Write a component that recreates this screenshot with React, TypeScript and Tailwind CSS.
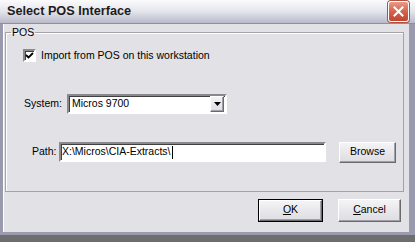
import React from "react";

const FONT = "font-['Liberation_Sans',Arial,sans-serif]";

const SUNKEN =
  "border-2 border-t-[#8a8a8a] border-l-[#8a8a8a] border-b-white border-r-white shadow-[inset_1px_1px_0_#404040] bg-white";

const RAISED =
  "border border-t-white border-l-white border-b-[#6a6a6a] border-r-[#6a6a6a] shadow-[inset_-1px_-1px_0_#a0a0a8] bg-linear-to-b from-[#f4f4f6] to-[#dddde2]";

function CloseButton() {
  return (
    <div className="flex h-[21px] w-[21px] items-center justify-center rounded-[3px] border border-white bg-linear-to-b from-[#e89a88] via-[#d6624a] to-[#c0452f] shadow-[0_0_0_1px_#b05040]">
      <svg width="11" height="11" viewBox="0 0 11 11">
        <path d="M1.5 1.5 L9.5 9.5 M9.5 1.5 L1.5 9.5" stroke="white" strokeWidth="2" strokeLinecap="square" />
      </svg>
    </div>
  );
}

function Checkbox() {
  return (
    <div className={`flex h-[13px] w-[13px] items-center justify-center ${SUNKEN}`}>
      <svg width="9" height="9" viewBox="0 0 9 9">
        <path d="M1 4 L3.5 6.5 L8 2" stroke="black" strokeWidth="1.8" fill="none" />
      </svg>
    </div>
  );
}

export default function App() {
  return (
    <div className={`flex h-[242px] w-[415px] flex-col overflow-hidden bg-[#6e6e70] text-[10.5px] text-black ${FONT}`}>
      <div className="flex h-[235px] flex-col">
        {/* title bar */}
        <div className="flex h-[24px] items-center justify-between border-b border-[#8e8ea0] bg-linear-to-b from-[#fbfbfd] via-[#e4e4ec] to-[#babacb] pl-[7px] pr-[6px]">
          <span className="text-[12.7px] font-bold leading-none text-[#1c1c1c]">Select POS Interface</span>
          <CloseButton />
        </div>

        {/* body */}
        <div className="flex flex-1 flex-col border-l-[3px] border-r-[6px] border-b-[3px] border-l-[#9a9aae] border-r-[#9a9aae] border-b-[#9a9aae] bg-[#e2e1e6] shadow-[inset_1px_0_0_white]">
          <fieldset className="ml-[2px] mt-[2px] w-[399px] border border-[#a2a2a8] pb-[28px] shadow-[inset_1px_1px_0_white]">
            <legend className="ml-[5px] px-[1px] leading-[12px]">POS</legend>

            <div className="mt-[10px] flex items-center pl-[17px]">
              <Checkbox />
              <span className="ml-[5px]">Import from POS on this workstation</span>
            </div>

            <div className="mt-[30px] flex items-center pl-[18px]">
              <span className="w-[43px]">System:</span>
              <div className={`flex h-[20px] w-[160px] items-center justify-between pl-[3px] pr-[1px] ${SUNKEN}`}>
                <span>Micros 9700</span>
                <div className={`flex h-[16px] w-[14px] items-center justify-center ${RAISED}`}>
                  <svg width="7" height="4" viewBox="0 0 7 4">
                    <path d="M0 0 H7 L3.5 4 Z" fill="black" />
                  </svg>
                </div>
              </div>
            </div>

            <div className="mt-[28px] flex h-[21px] items-center pl-[26px]">
              <span className="w-[27px]">Path:</span>
              <div className={`flex h-[20px] w-[267px] items-center pl-[1px] ${SUNKEN}`}>
                <span>X:\Micros\CIA-Extracts\</span>
                <span className="ml-[1px] h-[13px] w-px bg-black" />
              </div>
              <button className={`ml-[13px] h-[21px] w-[57px] ${RAISED}`}>Browse</button>
            </div>
          </fieldset>

          <div className="mt-[7px] flex justify-end gap-[15px] pr-[8px]">
            <button className="h-[23px] w-[65px] border border-black">
              <div className={`flex h-full w-full items-center justify-center ${RAISED}`}>
                <span><span className="underline">O</span>K</span>
              </div>
            </button>
            <button className={`flex h-[23px] w-[63px] items-center justify-center ${RAISED}`}>
              <span><span className="underline">C</span>ancel</span>
            </button>
          </div>
        </div>
      </div>
    </div>
  );
}
